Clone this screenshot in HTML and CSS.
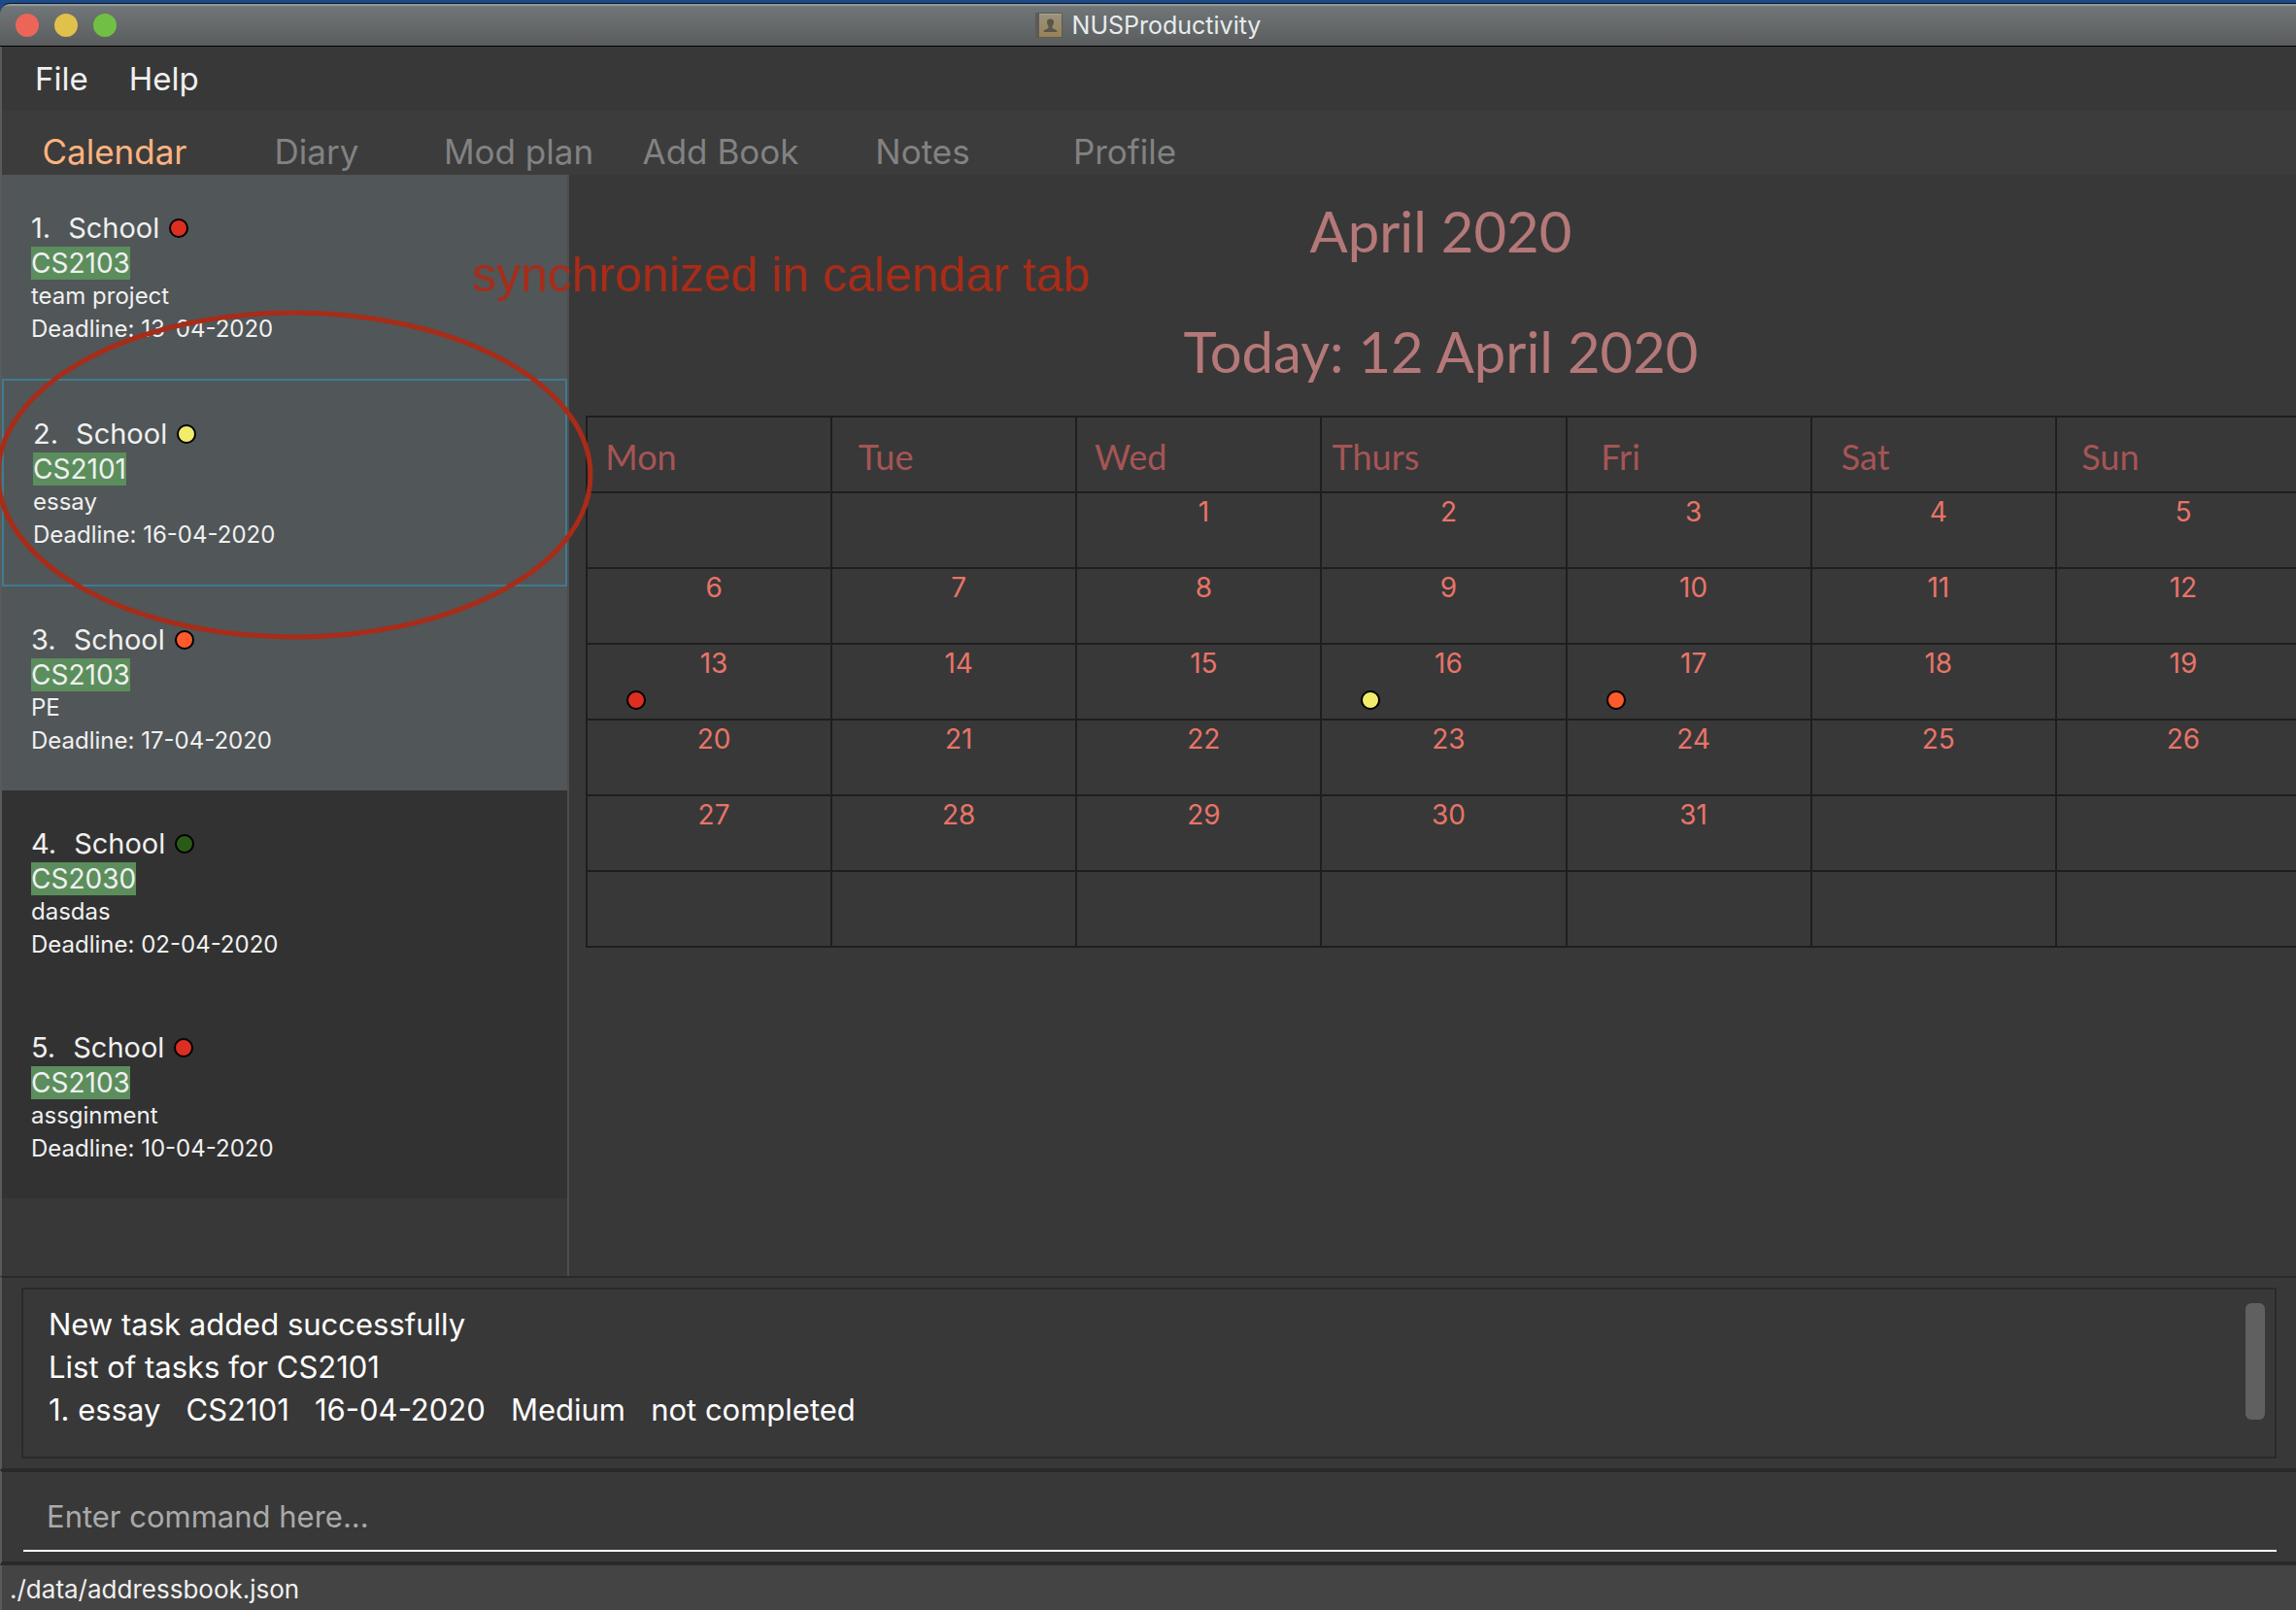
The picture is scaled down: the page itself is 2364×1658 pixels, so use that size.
FILE: index.html
```html
<!DOCTYPE html>
<html lang="en">
<head>
<meta charset="utf-8">
<title>NUSProductivity</title>
<link rel="stylesheet" href="styles.css">
</head>
<body>
<div class="window">
  <header class="titlebar">
    <div class="lights">
      <button class="light close" aria-label="Close"></button>
      <button class="light minimize" aria-label="Minimize"></button>
      <button class="light zoom" aria-label="Zoom"></button>
    </div>
    <svg class="book" viewBox="0 0 28 26" aria-hidden="true">
      <defs><linearGradient id="cover" x1="0" y1="0" x2="0" y2="1"><stop offset="0" stop-color="#9a927f"/><stop offset="1" stop-color="#978256"/></linearGradient></defs>
      <rect x="0" y="0" width="28" height="26" rx="1" fill="#5c5a55"/>
      <rect x="4" y="1" width="23" height="24" fill="url(#cover)"/>
      <path d="M4 1.500H27" stroke="#aaa594"/>
      <path d="M15.500 6.500c2.400 0 3.700 1.600 3.500 3.800-.2 1.800-1 2.700-1.500 3.700v2c1 1 5 1.200 5 4H8.500c0-2.800 4-3 5-4v-2c-.5-1-1.300-1.900-1.500-3.700-.2-2.200 1.100-3.800 3.500-3.800z" fill="#5b564b"/>
    </svg>
    <h1 class="app-name">NUSProductivity</h1>
  </header>

  <nav class="menubar">
    <button class="menu">File</button>
    <button class="menu">Help</button>
  </nav>

  <nav class="tabs">
    <button class="tab active">Calendar</button>
    <button class="tab">Diary</button>
    <button class="tab">Mod plan</button>
    <button class="tab">Add Book</button>
    <button class="tab">Notes</button>
    <button class="tab">Profile</button>
  </nav>

  <main class="content">
    <ul class="tasks">
      <li class="task lit">
        <div class="task-head"><span>1.</span><span>School</span><i class="dot red"></i></div>
        <span class="module">CS2103</span>
        <p>team project</p>
        <p>Deadline: 13-04-2020</p>
      </li>
      <li class="task lit selected">
        <div class="task-head"><span>2.</span><span>School</span><i class="dot yellow"></i></div>
        <span class="module">CS2101</span>
        <p>essay</p>
        <p>Deadline: 16-04-2020</p>
      </li>
      <li class="task lit">
        <div class="task-head"><span>3.</span><span>School</span><i class="dot orange"></i></div>
        <span class="module">CS2103</span>
        <p>PE</p>
        <p>Deadline: 17-04-2020</p>
      </li>
      <li class="task">
        <div class="task-head"><span>4.</span><span>School</span><i class="dot green"></i></div>
        <span class="module">CS2030</span>
        <p>dasdas</p>
        <p>Deadline: 02-04-2020</p>
      </li>
      <li class="task">
        <div class="task-head"><span>5.</span><span>School</span><i class="dot red"></i></div>
        <span class="module">CS2103</span>
        <p>assginment</p>
        <p>Deadline: 10-04-2020</p>
      </li>
    </ul>

    <section class="calendar">
      <h2>April 2020</h2>
      <h2>Today: 12 April 2020</h2>
      <table class="month">
        <thead>
          <tr><th><span>Mon</span></th><th><span>Tue</span></th><th><span>Wed</span></th><th><span>Thurs</span></th><th><span>Fri</span></th><th><span>Sat</span></th><th><span>Sun</span></th></tr>
        </thead>
        <tbody>
          <tr><td></td><td></td><td>1</td><td>2</td><td>3</td><td>4</td><td>5</td></tr>
          <tr><td>6</td><td>7</td><td>8</td><td>9</td><td>10</td><td>11</td><td>12</td></tr>
          <tr><td>13<i class="dot red"></i></td><td>14</td><td>15</td><td>16<i class="dot yellow"></i></td><td>17<i class="dot orange"></i></td><td>18</td><td>19</td></tr>
          <tr><td>20</td><td>21</td><td>22</td><td>23</td><td>24</td><td>25</td><td>26</td></tr>
          <tr><td>27</td><td>28</td><td>29</td><td>30</td><td>31</td><td></td><td></td></tr>
          <tr><td></td><td></td><td></td><td></td><td></td><td></td><td></td></tr>
        </tbody>
      </table>
    </section>
  </main>

  <section class="result">
    <div class="result-box">
      <div class="result-text">
        <p>New task added successfully</p>
        <p>List of tasks for CS2101</p>
        <p>1. essay   CS2101   16-04-2020   Medium   not completed</p>
      </div>
      <div class="thumb"></div>
    </div>
  </section>

  <form class="command">
    <input type="text" aria-label="Command" placeholder="Enter command here...">
  </form>

  <footer class="status">./data/addressbook.json</footer>

  <svg class="mark" viewBox="0 0 612 344" aria-hidden="true"><ellipse cx="303" cy="173" rx="305" ry="167"/></svg>
  <p class="note">synchronized in calendar tab</p>
</div>
</body>
</html>
```
FILE: styles.css
```css
* { box-sizing: border-box; }

body {
  margin: 0;
  background: #1c4b8c;
  color: #f0f0f0;
  font-family: Inter, "Liberation Sans", sans-serif;
}

h1, h2, p, ul { margin: 0; padding: 0; font-weight: 400; }
button { border: 0; padding: 0; background: none; color: inherit; font: inherit; }

.window {
  position: relative;
  display: flex;
  flex-direction: column;
  min-height: 100vh;
  border-top: 3px solid #1c4b8c;
  background: linear-gradient(#1c4b8c 20px, #383838 20px);
  overflow: hidden;
}

.titlebar {
  display: flex;
  align-items: center;
  justify-content: center;
  gap: 10px;
  position: relative;
  height: 45px;
  border-top: 1px solid #0c1420;
  border-bottom: 1px solid #000;
  border-radius: 10px 0 0 0;
  background: linear-gradient(#989c9e 0, #989c9e 1px, #707577 3px, #5a5d5e 100%);
}
.lights { position: absolute; left: 16px; display: flex; gap: 16px; }
.light { width: 24px; height: 24px; border-radius: 50%; }
.close { background: #ed6559; }
.minimize { background: #e0c14c; }
.zoom { background: #71c044; }
.book { width: 28px; height: 26px; }
.app-name { font-size: 25px; line-height: 40px; color: #e8ebec; }

.menubar, .tabs, .content, .result, .command, .status { border-left: 2px solid #5a5a5a; }

.menubar { display: flex; gap: 42px; padding: 0 34px; }
.menu { font-size: 33px; line-height: 66px; }

.tabs { display: flex; padding: 18px 12px 0; background: #3c3c3c; }
.tab { width: 208px; font-size: 35px; line-height: 48px; color: #828282; }
.tab.active { color: #ffb380; }

.content { display: flex; flex: 1; }

.tasks { width: 584px; flex: none; border-right: 2px solid #4d4d4d; list-style: none; }
.task { padding: 36px 30px 34px; background: #323232; font-size: 24px; line-height: 34px; }
.lit { background: #515658; }
.selected { border: 2px solid #3e7b91; }
.task-head { display: flex; align-items: center; font-size: 29px; line-height: 38px; }
.task-head span + span { margin: 0 10px 0 18px; }
.module { display: block; width: fit-content; background: #5b8e5c; font-size: 28px; }

.dot { display: block; width: 20px; height: 20px; border: 2px solid #000; border-radius: 50%; }
.red { background: #dd2e22; }
.yellow { background: #f2ec6c; }
.orange { background: #ff5a2b; }
.green { background: #2b5a16; }

.calendar { flex: 1; min-width: 0; padding-left: 17px; }
.calendar h2 {
  padding-bottom: 8px;
  font-family: Lato, sans-serif;
  font-size: 58px;
  line-height: 116px;
  text-align: center;
  color: #b57878;
}
.month {
  width: calc(100% + 6px);
  table-layout: fixed;
  border-collapse: collapse;
}
.month th, .month td {
  height: 78px;
  padding: 0;
  border: 2px solid #1e1e1e;
  font-weight: 400;
}
.month th { text-align: left; font-family: Lato, sans-serif; font-size: 36px; color: #a55555; }
.month th span { display: block; width: 110px; padding-top: 4px; text-align: center; }
.month td {
  padding: 1px 0 0 10px;
  vertical-align: top;
  text-align: center;
  font-size: 28px;
  line-height: 36px;
  color: #e87468;
}
.month .dot { margin: 10px 0 0 30px; }

.result { padding: 10px 20px; border-top: 2px solid #2a2a2a; border-bottom: 2px solid #2a2a2a; }
.result-box {
  display: flex;
  justify-content: space-between;
  height: 176px;
  padding: 14px 10px 14px 26px;
  border: 2px solid #2a2a2a;
}
.result-text { font-size: 31px; line-height: 44px; color: #fff; }
.result-text p { white-space: pre-wrap; }
.thumb { flex: none; width: 20px; height: 120px; border-radius: 6px; background: #606060; }

.command { padding: 10px 20px 10px 22px; border-top: 2px solid #2a2a2a; border-bottom: 4px solid #2a2a2a; }
.command input {
  display: block;
  width: 100%;
  height: 72px;
  padding: 0 24px;
  border: 0;
  border-bottom: 2px solid #fff;
  background: none;
  color: #fff;
  font: 31px Inter, "Liberation Sans", sans-serif;
}
.command input::placeholder { color: #aaa; opacity: 1; }

.status { padding: 4px 8px 0; background: #444; font-size: 26px; line-height: 42px; }

.mark { position: absolute; left: 0; top: 313px; width: 612px; height: 344px; fill: none; stroke: #a82c18; stroke-width: 5; }
.note {
  position: absolute;
  left: 486px;
  top: 252px;
  font: 50px/56px "Liberation Sans", Arial, sans-serif;
  color: #a82c18;
  white-space: nowrap;
}
```
